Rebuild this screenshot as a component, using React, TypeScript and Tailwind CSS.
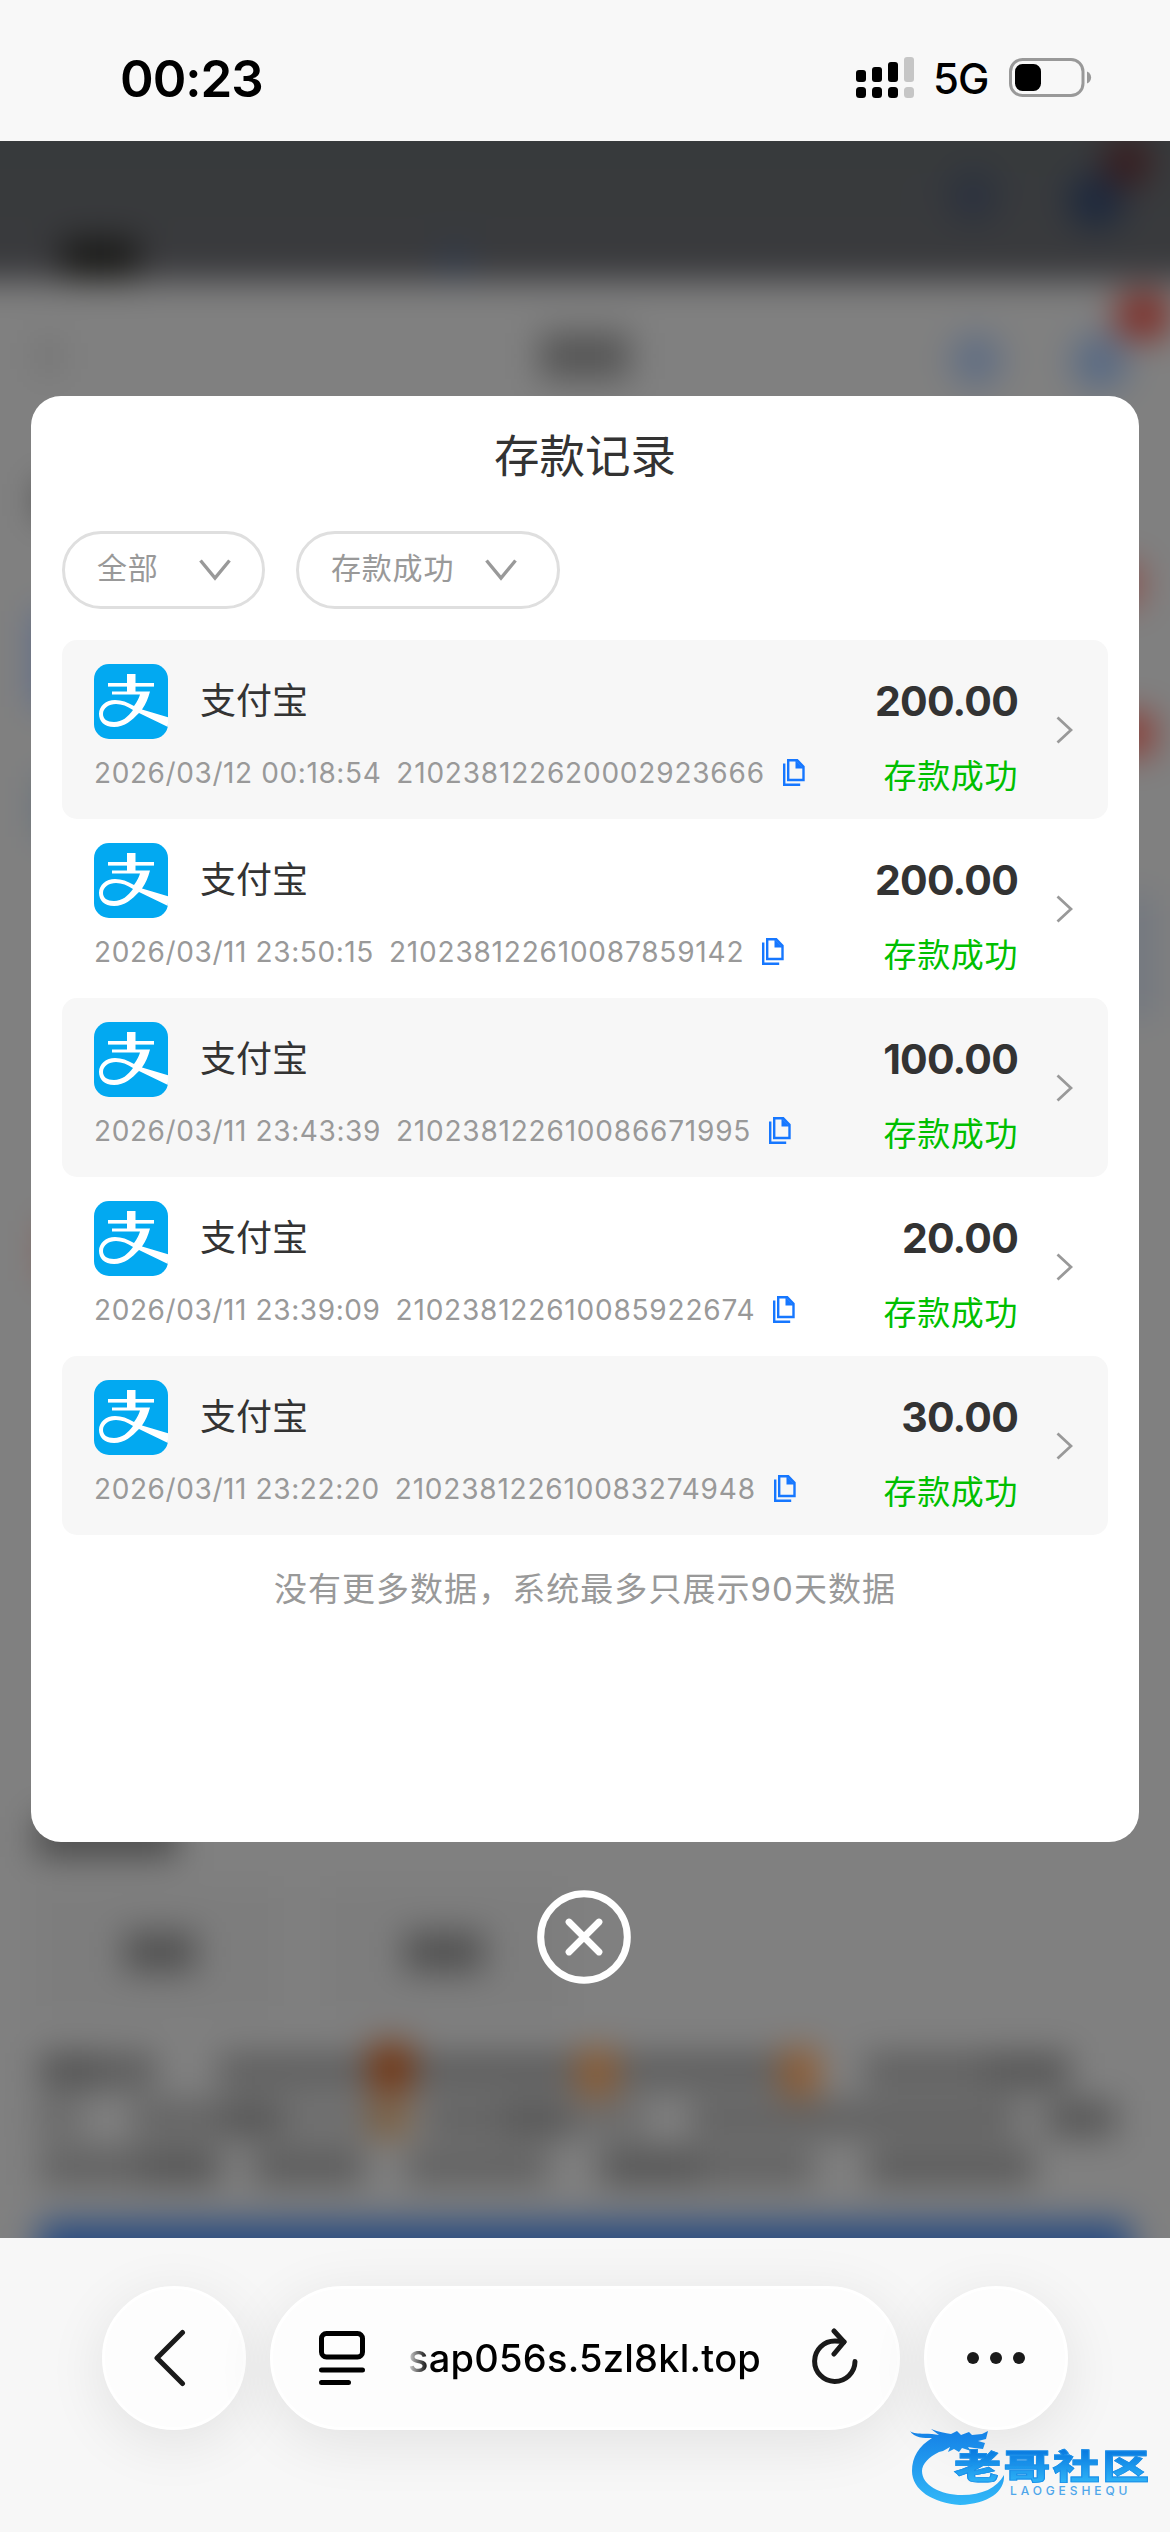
import React from "react";

type RecordItem = { time: string; id: string; amount: string };

const records: RecordItem[] = [
  { time: "2026/03/12 00:18:54", id: "210238122620002923666", amount: "200.00" },
  { time: "2026/03/11 23:50:15", id: "210238122610087859142", amount: "200.00" },
  { time: "2026/03/11 23:43:39", id: "210238122610086671995", amount: "100.00" },
  { time: "2026/03/11 23:39:09", id: "210238122610085922674", amount: "20.00" },
  { time: "2026/03/11 23:22:20", id: "210238122610083274948", amount: "30.00" },
];

function StatusBar() {
  return (
    <header className="flex h-[141px] shrink-0 items-start justify-between bg-[#f8f8f8] pl-[120px] pr-[78px]">
      <div className="mt-[47px] text-[51px] font-semibold leading-[64px] tracking-[-1px] text-black">00:23</div>
      <div className="mt-[56px] flex items-start">
        <svg width="60" height="43" viewBox="0 0 60 43" fill="#000">
          <rect x="0" y="14" width="10" height="12" rx="3" />
          <rect x="16" y="11" width="10" height="15" rx="3" />
          <rect x="32" y="6" width="10" height="20" rx="3" />
          <rect x="48" y="1" width="10" height="25" rx="3" fill="#c6c6c6" />
          <rect x="0" y="31" width="10" height="11" rx="3.5" />
          <rect x="16" y="31" width="10" height="11" rx="3.5" />
          <rect x="32" y="31" width="10" height="11" rx="3.5" />
          <rect x="48" y="31" width="10" height="11" rx="3.5" fill="#c6c6c6" />
        </svg>
        <div className="ml-[17px] w-[56px] text-[42px] font-medium leading-[46px] tracking-[-1px] text-black">5G</div>
        <svg className="ml-[20px]" width="83" height="41" viewBox="0 0 83 41">
          <rect x="1.500" y="3.500" width="72.500" height="36" rx="12" fill="none" stroke="#999" strokeWidth="3" />
          <rect x="6" y="8" width="26" height="27" rx="7.500" fill="#000" />
          <path d="M78 15.500c5.500 2 5.500 10 0 12z" fill="#999" />
        </svg>
      </div>
    </header>
  );
}

function Smudge({ className }: { className: string }) {
  return <div className={"shrink-0 " + className} />;
}

function BlurredPage() {
  return (
    <div className="h-full w-full overflow-hidden bg-[#808080]">
      <div className="-mx-[50px] -mt-[50px] flex h-[2200px] flex-col bg-[#808080] blur-[17px]">
        <div className="flex h-[190px] shrink-0 bg-gradient-to-b from-[#363a3c] to-[#3a3a3d] pl-[50px] pt-[50px]">
          <Smudge className="mt-[98px] ml-[62px] h-[41px] w-[76px] bg-[#191917]" />
          <Smudge className="ml-[300px] mt-[106px] h-[26px] w-[34px] bg-[#303a4a]" />
          <Smudge className="ml-[474px] mt-[28px] size-[54px] rounded-full bg-[#2c323e]" />
          <Smudge className="ml-[68px] mt-[32px] size-[56px] rounded-full bg-[#1d293e]" />
          <Smudge className="-ml-[20px] -mt-[4px] h-[50px] w-[46px] rounded-full bg-[#381c1e]" />
        </div>
        <div className="flex h-[116px] shrink-0 pl-[50px]">
          <Smudge className="ml-[42px] mt-[60px] h-[30px] w-[14px] bg-[#686868]" />
          <Smudge className="ml-[484px] mt-[52px] h-[46px] w-[90px] bg-[#555]" />
          <Smudge className="ml-[320px] mt-[53px] size-[52px] rounded-full bg-[#5f6d83]" />
          <Smudge className="ml-[70px] mt-[53px] size-[56px] rounded-full bg-[#586a84]" />
          <Smudge className="-ml-[14px] mt-[11px] h-[48px] w-[58px] rounded-full bg-[#7e2f29]" />
        </div>
        <div className="flex h-[1420px] shrink-0 justify-between px-[50px]">
          <div className="flex flex-col">
            <Smudge className="mt-[86px] ml-[38px] h-[34px] w-[40px] bg-[#484848]" />
            <Smudge className="mt-[94px] ml-[32px] h-[96px] w-[40px] bg-[#5f6d8a]" />
            <Smudge className="mt-[70px] ml-[38px] h-[60px] w-[40px] bg-[#62707c]" />
            <Smudge className="mt-[384px] ml-[42px] h-[60px] w-[34px] bg-[#866058]" />
          </div>
          <div className="flex flex-col items-end">
            <Smudge className="mt-[166px] mr-[28px] h-[42px] w-[36px] bg-[#8a4f4a]" />
            <Smudge className="mt-[108px] mr-[16px] h-[42px] w-[46px] bg-[#8a3a33]" />
            <Smudge className="mt-[140px] mr-[14px] h-[122px] w-[46px] bg-[#737880]" />
          </div>
        </div>
        <Smudge className="ml-[86px] h-[40px] w-[142px] bg-[#4a4a4a]" />
        <div className="mt-[30px] ml-[86px] flex h-[130px] shrink-0 gap-[36px]">
          <div className="flex w-[248px] items-center justify-center bg-[#7d7d7d]">
            <Smudge className="h-[40px] w-[72px] bg-[#505050]" />
          </div>
          <div className="flex w-[248px] items-center justify-center bg-[#7d7d7d]">
            <Smudge className="h-[40px] w-[80px] bg-[#505050]" />
          </div>
        </div>
        <div className="mt-[36px] ml-[90px] flex h-[36px] shrink-0">
          <Smudge className="w-[60px] bg-[#525252]" />
          <Smudge className="w-[56px] bg-[#5c5c5c]" />
          <Smudge className="ml-[62px] w-[152px] bg-[#5e5e5e]" />
          <Smudge className="-mt-[10px] h-[50px] w-[42px] bg-[#743510]" />
          <Smudge className="w-[166px] bg-[#5c5c5c]" />
          <Smudge className="-mt-[4px] h-[48px] w-[38px] bg-[#8c5a30]" />
          <Smudge className="w-[166px] bg-[#5d5d5d]" />
          <Smudge className="-mt-[4px] h-[48px] w-[36px] bg-[#905a2e]" />
          <Smudge className="ml-[46px] w-[120px] bg-[#5f5f5f]" />
          <Smudge className="w-[86px] bg-[#555]" />
        </div>
        <div className="mt-[12px] ml-[86px] flex h-[36px] shrink-0">
          <Smudge className="w-[46px] bg-[#686868]" />
          <Smudge className="ml-[50px] w-[90px] bg-[#636363]" />
          <Smudge className="w-[60px] bg-[#545454]" />
          <Smudge className="w-[88px] bg-[#6c6c6c]" />
          <Smudge className="w-[38px] bg-[#7b5c3a]" />
          <Smudge className="ml-[16px] w-[80px] bg-[#606060]" />
          <Smudge className="w-[64px] bg-[#545454]" />
          <Smudge className="w-[80px] bg-[#6a6a6a]" />
          <Smudge className="ml-[42px] w-[326px] bg-[#606060]" />
          <Smudge className="ml-[30px] w-[70px] bg-[#565656]" />
        </div>
        <div className="mt-[12px] ml-[90px] flex h-[36px] shrink-0">
          <Smudge className="w-[100px] bg-[#606060]" />
          <Smudge className="w-[80px] bg-[#545454]" />
          <Smudge className="ml-[34px] w-[110px] bg-[#5a5a5a]" />
          <Smudge className="ml-[42px] w-[142px] bg-[#606060]" />
          <Smudge className="ml-[52px] w-[100px] bg-[#545454]" />
          <Smudge className="w-[114px] bg-[#616161]" />
          <Smudge className="ml-[54px] w-[166px] bg-[#5a5a5a]" />
        </div>
        <div className="mx-[88px] mt-[36px] h-[100px] shrink-0 rounded-[10px] bg-[#2a4c80]" />
      </div>
    </div>
  );
}

function AlipayIcon() {
  return (
    <svg width="74" height="75" viewBox="0 0 74 75">
      <defs>
        <clipPath id="tile">
          <rect width="74" height="75" rx="15" />
        </clipPath>
      </defs>
      <g clipPath="url(#tile)">
        <rect width="74" height="75" fill="#02a9f1" />
        <rect x="33" y="10" width="8.500" height="20" fill="#fff" />
        <rect x="14" y="19" width="46" height="3.600" fill="#fff" />
        <path d="M18 27.500h38c-2 7-4 12-8 18l27 8v10L45 49C38 56 31 63 20 63 10 63 5 57 5 50c0-8 7-14 16-14 7 0 12 2 19 6 3-4 5-8 6-11.500H18zM39 46c-6-4-11-6-17-6-7 0-13 4-13 10 0 5 4 8 11 8 8 0 14-5 19-12z" fill="#fff" />
      </g>
    </svg>
  );
}

function CopyIcon() {
  return (
    <svg width="22" height="27" viewBox="0 0 22 27" fill="none" stroke="#1677ff" strokeWidth="2.400">
      <path d="M1.200 4.500v21.300h16" />
      <path d="M5.200 1.200h9l6.300 6.500V21H5.200z" />
      <path d="M12.500 1v8.500h8.500z" fill="#1677ff" stroke="none" />
    </svg>
  );
}

function Filter({ label, className }: { label: string; className: string }) {
  return (
    <div className={"flex h-[78px] items-center justify-between rounded-full border-[3px] border-[#dfdfdf] pl-[32px] " + className}>
      <span className="-mt-[4px] text-[30px] leading-[40px] tracking-[0.8px] text-[#999]">{label}</span>
      <svg width="32" height="22" viewBox="0 0 32 22" fill="none" stroke="#999" strokeWidth="3.400">
        <path d="M1.500 1.500L16 19L30.500 1.500" />
      </svg>
    </div>
  );
}

function RecordRow({ item, shaded }: { item: RecordItem; shaded: boolean }) {
  return (
    <div className={"flex h-[179px] justify-between rounded-[15px] pl-[32px] pr-[35px] " + (shaded ? "bg-[#f7f7f7]" : "bg-white")}>
      <div>
        <div className="mt-[24px] flex h-[75px] items-center">
          <AlipayIcon />
          <span className="-mt-[2px] ml-[32px] text-[36px] leading-[48px] text-[#333]">支付宝</span>
        </div>
        <div className="mt-[14px] flex h-[40px] items-center whitespace-pre text-[28px] leading-[40px] text-[#999]">
          <span className="tracking-[0.6px]">{item.time}</span>
          <span className="ml-[15px] tracking-[0.8px]">{item.id}</span>
          <span className="ml-[18px] -mt-[2px]">
            <CopyIcon />
          </span>
        </div>
      </div>
      <div className="flex">
        <div className="text-right">
          <div className="mt-[35px] text-[41px] font-bold leading-[52px] tracking-[-0.8px] text-[#333]">{item.amount}</div>
          <div className="mt-[25px] text-[33px] leading-[48px] tracking-[0.6px] text-[#00bf00]">存款成功</div>
        </div>
        <svg className="ml-[38px] mt-[76px]" width="17" height="28" viewBox="0 0 17 28" fill="none" stroke="#999" strokeWidth="2.800">
          <path d="M1.500 1.500L15 14L1.500 26.500" />
        </svg>
      </div>
    </div>
  );
}

function DepositDialog() {
  return (
    <div className="absolute inset-x-[31px] top-[255px] flex flex-col items-center">
      <section className="h-[1446px] w-full rounded-[30px] bg-white px-[31px] pt-[29px]">
        <h1 className="text-center text-[45.500px] leading-[64px] text-[#333]">存款记录</h1>
        <div className="mt-[42px] flex gap-[31px]">
          <Filter label="全部" className="w-[203px] pr-[31px]" />
          <Filter label="存款成功" className="w-[264px] pr-[40px]" />
        </div>
        <div className="mt-[31px]">
          {records.map((r, i) => (
            <RecordRow key={r.id} item={r} shaded={i % 2 === 0} />
          ))}
        </div>
        <p className="mt-[32px] text-center text-[33px] leading-[44px] tracking-[1.050px] text-[#999]">没有更多数据，系统最多只展示90天数据</p>
      </section>
      <svg className="-ml-[2px] mt-[48px]" width="94" height="94" viewBox="0 0 94 94" fill="none" stroke="#fff">
        <circle cx="47" cy="47" r="43.300" strokeWidth="7" />
        <path d="M32 32L62 62M62 32L32 62" strokeWidth="6.800" strokeLinecap="round" />
      </svg>
    </div>
  );
}

function Watermark() {
  return (
    <div className="absolute left-[905px] top-[184px] h-[86px] w-[250px]">
      <svg className="absolute left-0 top-0" width="110" height="86" viewBox="0 0 110 86">
        <defs>
          <linearGradient id="dragon" x1="0" y1="0" x2="0" y2="1">
            <stop offset="0" stopColor="#1480e6" />
            <stop offset="1" stopColor="#32b8f8" />
          </linearGradient>
        </defs>
        <g fill="url(#dragon)">
          <path d="M5 9c5 4 14 2 22 3l7 1-8-6c8 3 14 4 20 5l6-3 4 4 8-3 3 3 10-1 6-3-2 8-8 2 7 2-2 6-9-1-6-1 3 4-9-3-3 4-5-3-6 3 2-5-7 4-4 1c-10 5-17 12-17 19 0 14 18 24 40 24 20 0 35-7 42-20 1 17-16 29-44 30C28 81 7 68 7 49c0-14 7-25 20-33-8 0-18 0-22-7z" />
        </g>
      </svg>
      <div className="absolute left-[49px] top-[27px] origin-left scale-x-[1.380] whitespace-nowrap bg-gradient-to-b from-[#0877df] to-[#32b8f8] bg-clip-text text-[34px] font-black leading-[36px] tracking-[1.800px] text-transparent [-webkit-text-stroke:0.800px_#1b8fe8]">
        老哥社区
      </div>
      <div className="absolute left-[105px] top-[63px] whitespace-nowrap text-[12px] font-medium leading-[12px] tracking-[3.900px] text-[#4fa6ea]">LAOGESHEQU</div>
    </div>
  );
}

const pill = "flex h-[144px] items-center bg-[#fdfdfd] rounded-full border-[3px] border-white shadow-[0_12px_60px_rgba(0,0,0,0.09)] ";

function BrowserBar() {
  return (
    <footer className="relative h-[294px] shrink-0 overflow-hidden bg-[#f7f7f7]">
      <div className="ml-[102px] mt-[48px] flex gap-[24px]">
        <div className={pill + "w-[144px] pl-[48px]"}>
          <svg width="34" height="58" viewBox="0 0 34 58" fill="none" stroke="#1a1a1a" strokeWidth="5" strokeLinecap="round" strokeLinejoin="round">
            <path d="M29.500 3.500L4 29L29.500 54.500" />
          </svg>
        </div>
        <div className={pill + "w-[630px] pl-[46px]"}>
          <svg width="46" height="54" viewBox="0 0 46 54" fill="none" stroke="#000" strokeWidth="5" strokeLinecap="round">
            <rect x="2.500" y="2.500" width="41" height="23.500" rx="5" />
            <path d="M2.500 39h41M2.500 51.500h27" />
          </svg>
          <div className="ml-[43px] w-[354px] whitespace-nowrap bg-gradient-to-r from-[#ddd] via-black via-[7%] to-black bg-clip-text text-[38px] font-medium leading-[52px] tracking-[0.250px] text-transparent">
            sap056s.5zl8kl.top
          </div>
          <svg className="-mt-[4px] ml-[50px]" width="46" height="56" viewBox="0 0 46 56" fill="none" stroke="#1a1a1a" strokeWidth="5" strokeLinecap="round" strokeLinejoin="round">
            <path d="M43 33.500a20.200 20.200 0 1 1-20-20.500q5 0 9 1" />
            <path d="M22 3L32 14L22 26" />
          </svg>
        </div>
        <div className={pill + "w-[144px] justify-center gap-[11px]"}>
          <i className="size-[12px] rounded-full bg-[#1a1a1a]" />
          <i className="size-[12px] rounded-full bg-[#1a1a1a]" />
          <i className="size-[12px] rounded-full bg-[#1a1a1a]" />
        </div>
      </div>
      <Watermark />
    </footer>
  );
}

export default function App() {
  return (
    <div className="flex h-[2532px] w-[1170px] flex-col overflow-hidden bg-[#f7f7f7] font-['Inter','Noto_Sans_CJK_SC',sans-serif]">
      <StatusBar />
      <main className="relative h-[2097px] shrink-0 overflow-hidden">
        <BlurredPage />
        <DepositDialog />
      </main>
      <BrowserBar />
    </div>
  );
}
